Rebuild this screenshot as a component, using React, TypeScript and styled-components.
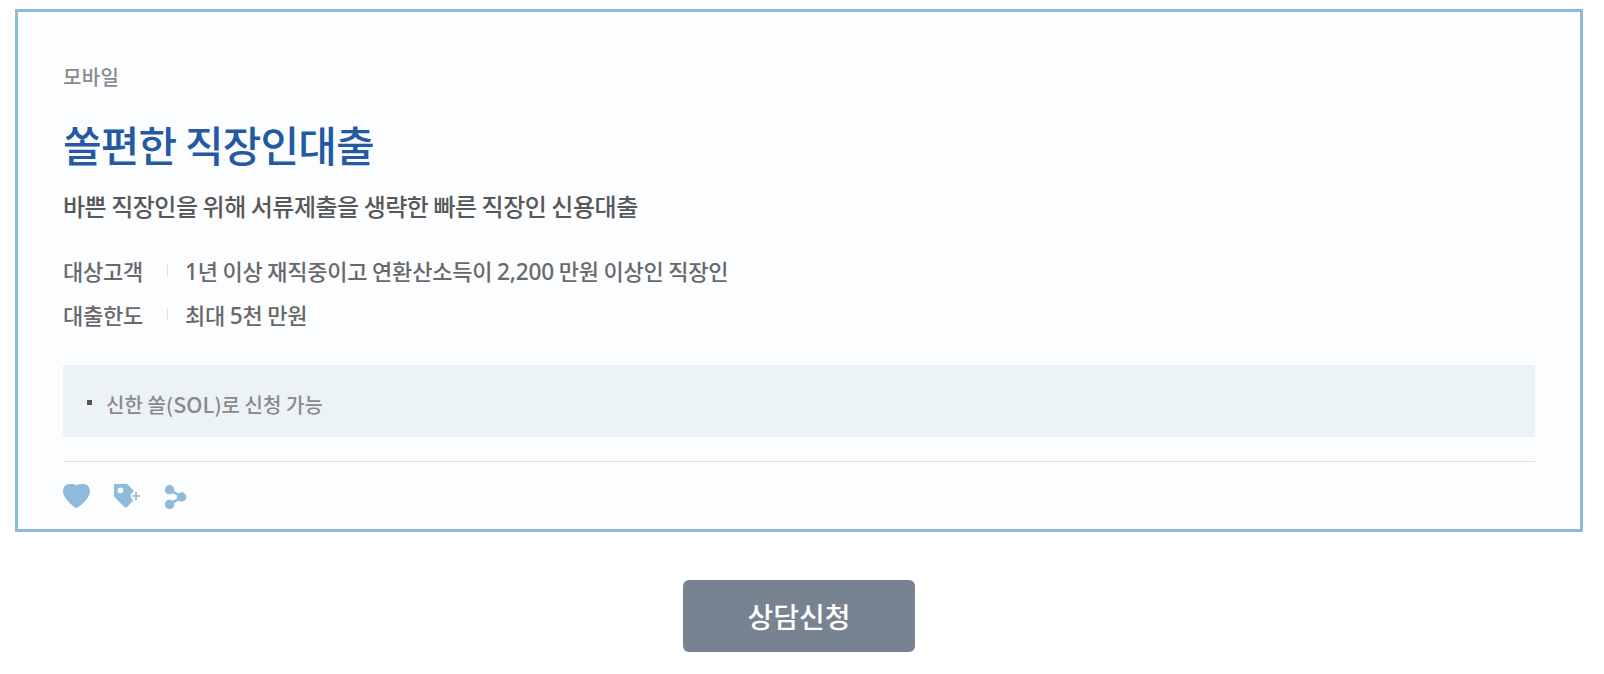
import styled, { createGlobalStyle } from "styled-components";

const GlobalStyle = createGlobalStyle`
  * {
    box-sizing: border-box;
  }

  body {
    margin: 0;
    background: #fff;
    font-family: "Noto Sans CJK KR", sans-serif;
    font-weight: 500;
  }

  p, h2, dl, dt, dd, ul, li {
    margin: 0;
    padding: 0;
  }
`;

const Page = styled.main`
  display: flex;
  flex-direction: column;
  align-items: center;
  height: 674px;
  padding: 9px 21px 0 15px;
`;

const Card = styled.section`
  width: 100%;
  height: 523px;
  padding: 50px 45px 0;
  border: 3px solid #8dbbd9;
  background: #fcfdff;
`;

const Channel = styled.p`
  font-size: 20px;
  line-height: 30px;
  letter-spacing: 0.3px;
  color: #8a8a8a;
`;

const Title = styled.h2`
  margin-top: 21px;
  font-size: 42px;
  line-height: 62px;
  font-weight: 500;
  letter-spacing: -0.86px;
  color: #245aa3;
`;

const Summary = styled.p`
  margin-top: 13px;
  font-size: 24px;
  line-height: 36px;
  letter-spacing: -0.47px;
  color: #585858;
`;

const Info = styled.dl`
  margin-top: 24px;
`;

const InfoRow = styled.div`
  display: flex;
  height: 44px;
  font-size: 22px;
  line-height: 44px;
  letter-spacing: -0.22px;
  color: #696969;
`;

const InfoLabel = styled.dt`
  width: 104px;
`;

const InfoValue = styled.dd`
  display: flex;

  &::before {
    content: "";
    width: 1px;
    height: 13px;
    margin: 16px 17px 0 0;
    background: #dfe1e4;
  }
`;

const Num = styled.span`
  font-family: "Noto Sans", sans-serif;
  font-size: 1.03em;
  line-height: 0;
`;

const AppName = styled.span`
  font-size: 1.07em;
  line-height: 0;
`;

const Notes = styled.ul`
  height: 72px;
  margin-top: 29px;
  padding: 0 24px;
  background: #ebf3f7;
  list-style: none;
`;

const Note = styled.li`
  display: flex;
  font-size: 20px;
  line-height: 80px;
  height: 80px;
  letter-spacing: 0.06px;
  color: #8a8a8a;

  &::before {
    content: "";
    width: 5px;
    height: 5px;
    margin: 35px 14px 0 0;
    background: #555;
  }
`;

const Actions = styled.div`
  display: flex;
  align-items: flex-start;
  gap: 24px;
  margin-top: 24px;
  padding-top: 22px;
  border-top: 1px solid #dfe1e4;
`;

const IconButton = styled.button`
  display: flex;
  padding: 0;
  border: 0;
  background: transparent;
  color: #8dbbd9;
`;

const ApplyButton = styled.button`
  width: 232px;
  height: 72px;
  margin-top: 48px;
  padding: 0 0 1px;
  border: 0;
  border-radius: 6px;
  background: #788391;
  color: #fff;
  font-family: inherit;
  font-size: 28px;
  font-weight: 500;
`;

const HeartIcon = () => (
  <svg width="27" height="24" viewBox="0 0 27 24" fill="currentColor">
    <path d="M13.5 24 C11 23.2 0 14.5 0 7.2 C0 2.6 3.2 0 7 0 C9.8 0 12 .4 13.5 1.4 C15 .4 17.2 0 20 0 C23.8 0 27 2.6 27 7.2 C27 14.5 16 23.2 13.5 24Z" />
  </svg>
);

const TagIcon = () => (
  <svg width="27" height="24" viewBox="0 0 27 24" fill="currentColor">
    <path
      fillRule="evenodd"
      d="M0 0H13.4L19.4 6.4V8C18 8.2 18 9.6 16.8 10V14C18 14.4 17.8 15.8 19.2 16.4L12.6 23.4Q11.8 24.2 11 23.4L0 12.8ZM6.4 3.4A2.9 2.9 0 1 0 6.4 9.2A2.9 2.9 0 1 0 6.4 3.4Z"
    />
    <path d="M21.2 8H22.8V11.2H26V12.8H22.8V16H21.2V12.8H18V11.2H21.2Z" />
  </svg>
);

const ShareIcon = () => (
  <svg width="22" height="26" viewBox="0 0 22 26" fill="currentColor">
    <circle cx="4.6" cy="5.7" r="4.7" />
    <circle cx="16.6" cy="13" r="4.7" />
    <circle cx="4.6" cy="20.4" r="4.7" />
    <path d="M4.6 5.7L16.6 13L4.6 20.4" fill="none" stroke="currentColor" strokeWidth="2.6" />
  </svg>
);

export default function App() {
  return (
    <>
      <GlobalStyle />
      <Page>
        <Card>
          <Channel>모바일</Channel>
          <Title>쏠편한 직장인대출</Title>
          <Summary>
            바쁜 직장인을 위해 서류제출을 생략한 빠른 직장인 신용대출
          </Summary>
          <Info>
            <InfoRow>
              <InfoLabel>대상고객</InfoLabel>
              <InfoValue>
                <span>
                  <Num>1</Num>년 이상 재직중이고 연환산소득이{" "}
                  <Num>2,200</Num> 만원 이상인 직장인
                </span>
              </InfoValue>
            </InfoRow>
            <InfoRow>
              <InfoLabel>대출한도</InfoLabel>
              <InfoValue>
                <span>
                  최대 <Num>5</Num>천 만원
                </span>
              </InfoValue>
            </InfoRow>
          </Info>
          <Notes>
            <Note>
              <span>
                신한 쏠(<AppName>SOL</AppName>)로 신청 가능
              </span>
            </Note>
          </Notes>
          <Actions>
            <IconButton type="button" aria-label="관심상품">
              <HeartIcon />
            </IconButton>
            <IconButton type="button" aria-label="태그 추가">
              <TagIcon />
            </IconButton>
            <IconButton type="button" aria-label="공유">
              <ShareIcon />
            </IconButton>
          </Actions>
        </Card>
        <ApplyButton type="button">상담신청</ApplyButton>
      </Page>
    </>
  );
}
